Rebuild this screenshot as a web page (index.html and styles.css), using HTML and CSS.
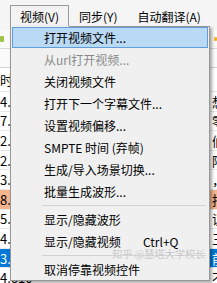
FILE: index.html
```html
<!DOCTYPE html>
<html>
<head>
<meta charset="utf-8">
<link rel="stylesheet" href="styles.css">
</head>
<body>
<div class="app">
  <div class="menubar">
    <div class="mb-item open">视频(V)</div>
    <div class="mb-item">同步(Y)</div>
    <div class="mb-item">自动翻译(A)</div>
  </div>
  <div class="toolbar">
    <span class="ticon ticon-left"></span>
    <span class="ticon ticon-right"></span>
  </div>
  <div class="subbar"></div>
  <div class="header"><span class="c1">时间</span><span class="c2"></span></div>
  <div class="grid">
    <div class="row"><span class="c1">4.520</span><span class="c2">想要</span></div>
    <div class="row"><span class="c1">7.180</span><span class="c2">零点</span></div>
    <div class="row"><span class="c1">2.340</span><span class="c2">们的</span></div>
    <div class="row"><span class="c1">2.960</span><span class="c2">阿里</span></div>
    <div class="row"><span class="c1">3.410</span><span class="c2">，我</span></div>
    <div class="row orange"><span class="c1">8.050</span><span class="c2">拍摄</span></div>
    <div class="row"><span class="c1">5.730</span><span class="c2">议论</span></div>
    <div class="row"><span class="c1">4.880</span><span class="c2">三个</span></div>
    <div class="row selected"><span class="c1">3.270</span><span class="c2">前面</span></div>
    <div class="row"><span class="c1">4.610</span><span class="c2">不是</span></div>
  </div>
</div>

<div class="menu">
  <div class="mi hot">打开视频文件...</div>
  <div class="mi disabled">从url打开视频...</div>
  <div class="mi">关闭视频文件</div>
  <div class="mi">打开下一个字幕文件...</div>
  <div class="mi">设置视频偏移...</div>
  <div class="mi">SMPTE 时间 (弃帧)</div>
  <div class="mi">生成/导入场景切换...</div>
  <div class="mi">批量生成波形...</div>
  <div class="sep"></div>
  <div class="mi">显示/隐藏波形</div>
  <div class="mi"><span class="lbl">显示/隐藏视频</span><span class="key">Ctrl+Q</span></div>
  <div class="sep"></div>
  <div class="mi">取消停靠视频控件</div>
</div>

<div class="watermark">知乎 @慧塔大学校长</div>
</body>
</html>
```

FILE: styles.css
```css
html, body {
  margin: 0;
  padding: 0;
}
body {
  width: 217px;
  height: 283px;
  overflow: hidden;
  position: relative;
  background: #ffffff;
  font-family: "Noto Sans CJK SC", sans-serif;
  color: #000;
}
.app {
  width: 217px;
}
.menubar {
  height: 30px;
  box-sizing: border-box;
  padding: 5px 0 0 10px;
  display: flex;
  background: #f5f5f5;
  font-size: 12px;
}
.mb-item {
  height: 21px;
  box-sizing: border-box;
  padding: 1px 9px 0 9px;
  display: flex;
  align-items: center;
  border: 1px solid transparent;
  border-bottom: none;
  white-space: nowrap;
}
.mb-item.open {
  border-color: #9a9a9a;
  background: #f3f3f3;
}
.toolbar {
  height: 19px;
  box-sizing: border-box;
  border-bottom: 1px solid #d9d9d9;
  background: #fafafa;
  display: flex;
  justify-content: space-between;
  align-items: center;
}
.ticon {
  width: 4px;
  height: 6px;
  border-radius: 1px;
}
.ticon-left {
  background: #9cc34a;
}
.ticon-right {
  background: #f0b429;
  width: 3px;
  height: 4px;
}
.subbar {
  height: 19px;
  box-sizing: border-box;
  border-bottom: 1px solid #d4d4d4;
  background: #fbfbfb;
}
.header {
  height: 24px;
  box-sizing: border-box;
  display: flex;
  align-items: center;
  font-size: 13px;
  border-bottom: 1px solid #e6e6e6;
}
.c1 {
  width: 212px;
  flex: none;
  white-space: nowrap;
  overflow: hidden;
}
.c2 {
  white-space: nowrap;
  overflow: hidden;
  width: 5px;
  flex: none;
}
.grid {
  display: flex;
  flex-direction: column;
}
.row {
  height: 19.6px;
  box-sizing: border-box;
  display: flex;
  align-items: center;
  font-size: 13px;
  border-bottom: 1px solid #e8e8e8;
}
.row.orange {
  background: #f5b38e;
}
.row.selected {
  background: #0078d7;
  color: #fff;
}

.menu {
  position: absolute;
  left: 10px;
  top: 26px;
  width: 200px;
  box-sizing: border-box;
  border: 1px solid #979797;
  border-top: none;
  background: #f0f0f0;
  padding: 0 1px 0 1px;
  font-size: 12px;
  box-shadow: 2px 2px 3px rgba(0, 0, 0, 0.35);
}
.menu::before {
  content: "";
  position: absolute;
  left: 58px;
  right: -1px;
  top: 0;
  height: 1px;
  background: #979797;
}
.mi {
  height: 22px;
  box-sizing: border-box;
  display: flex;
  align-items: center;
  padding-left: 32px;
  white-space: nowrap;
}
.mi.hot {
  background: #b9d9f5;
  border: 1px solid #5e9fd9;
  padding-left: 31px;
  margin-top: 1px;
  height: 21px;
}
.mi.disabled {
  color: #8a8a8a;
}
.lbl {
  width: 99px;
  flex: none;
}
.sep {
  height: 6px;
  display: flex;
  align-items: center;
  padding: 0 2px 0 30px;
}
.sep::after {
  content: "";
  flex: 1;
  height: 1px;
  background: #d2d2d2;
}
.watermark {
  position: absolute;
  left: 112px;
  top: 246px;
  font-size: 10.5px;
  letter-spacing: -0.3px;
  color: rgba(185, 185, 185, 0.85);
  white-space: nowrap;
  text-shadow: 0 0 1px #ffffff;
}
```
